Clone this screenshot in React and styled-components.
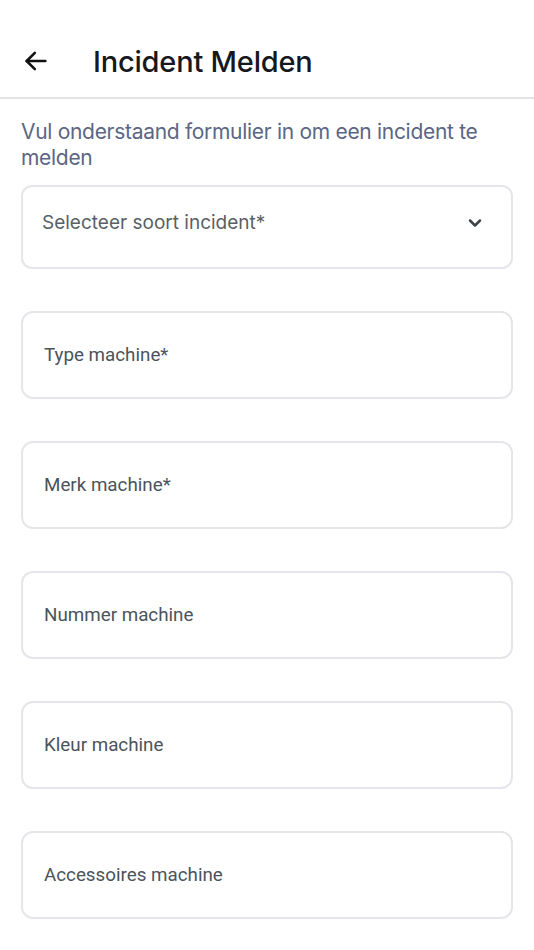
import React from "react";
import styled, { createGlobalStyle } from "styled-components";

const Global = createGlobalStyle`
  html, body { margin: 0; padding: 0; background: #fff; }
  * { box-sizing: border-box; }
`;

const Page = styled.div`
  width: 534px;
  min-height: 950px;
  background: #fff;
  font-family: "Inter", sans-serif;
`;

const Header = styled.header`
  height: 99px;
  display: flex;
  align-items: center;
  padding: 25px 0 0 22px;
  border-bottom: 2px solid #e3e3e6;
  gap: 43px;
`;

const BackButton = styled.button`
  border: none;
  background: none;
  padding: 0;
  width: 28px;
  height: 28px;
  display: flex;
  align-items: center;
  justify-content: center;
  color: #111;
`;

const Title = styled.h1`
  margin: 0;
  font-size: 29px;
  font-weight: 500;
  color: #16181c;
  letter-spacing: -0.2px;
`;

const Form = styled.div`
  padding: 20px 21px 0 21px;
  display: flex;
  flex-direction: column;
`;

const Intro = styled.p`
  margin: 0 0 14px 0;
  font-size: 21px;
  line-height: 26px;
  color: #5b6685;
  letter-spacing: -0.3px;
`;

const Fields = styled.div`
  display: flex;
  flex-direction: column;
  gap: 42px;
`;

const Select = styled.div`
  height: 84px;
  border: 2px solid #e4e6ea;
  border-radius: 11px;
  display: flex;
  align-items: flex-start;
  justify-content: space-between;
  padding: 24px 26px 0 19px;
  color: #5a5f66;
  font-size: 19px;
  letter-spacing: 0;
`;

const Chevron = styled.span`
  display: flex;
  margin-top: 2px;
  color: #3d4349;
`;

const Input = styled.div`
  height: 88px;
  border: 2px solid #e4e6ea;
  border-radius: 12px;
  display: flex;
  align-items: center;
  padding: 0 21px;
  font-family: "Roboto", sans-serif;
  font-size: 18.8px;
  color: #4b535c;
`;

const fields = [
  "Type machine*",
  "Merk machine*",
  "Nummer machine",
  "Kleur machine",
  "Accessoires machine",
];

export default function App() {
  return (
    <Page>
      <Global />
      <Header>
        <BackButton aria-label="Terug">
          <svg width="28" height="28" viewBox="0 0 24 24" fill="none" stroke="currentColor" strokeWidth="2.2" strokeLinecap="round" strokeLinejoin="round">
            <path d="M20 12H4" />
            <path d="M11 5l-7 7 7 7" />
          </svg>
        </BackButton>
        <Title>Incident Melden</Title>
      </Header>
      <Form>
        <Intro>Vul onderstaand formulier in om een incident te melden</Intro>
        <Fields>
          <Select>
            <span>Selecteer soort incident*</span>
            <Chevron>
              <svg width="20" height="20" viewBox="0 0 24 24" fill="none" stroke="currentColor" strokeWidth="3" strokeLinecap="round" strokeLinejoin="round">
                <path d="M6 9l6 6 6-6" />
              </svg>
            </Chevron>
          </Select>
          {fields.map((f) => (
            <Input key={f}>{f}</Input>
          ))}
        </Fields>
      </Form>
    </Page>
  );
}
